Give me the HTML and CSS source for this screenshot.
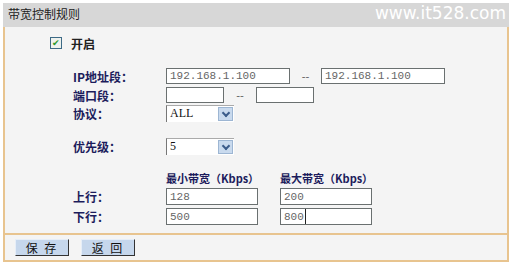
FILE: index.html
```html
<!DOCTYPE html>
<html lang="zh-CN">
<head>
    <meta charset="UTF-8">
    <title>带宽控制规则</title>
    <link rel="stylesheet" href="styles.css">
</head>
<body>
    <div class="page">
        <div class="title">
            <span>带宽控制规则</span>
            <span class="mark">www.it528.com</span>
        </div>
        <form class="panel">
            <div class="row check-row">
                <span class="check">&#10004;</span>
                <span class="label">开启</span>
            </div>
            <div class="row ip-row">
                <span class="label">IP地址段：</span>
                <input type="text" class="ip" value="192.168.1.100">
                <span class="dash">--</span>
                <input type="text" class="ip" value="192.168.1.100">
            </div>
            <div class="row port-row">
                <span class="label">端口段：</span>
                <input type="text" class="port" value="">
                <span class="dash short">--</span>
                <input type="text" class="port" value="">
            </div>
            <div class="row sel-row">
                <span class="label">协议：</span>
                <div class="select"><span class="val">ALL</span><span class="arrow"></span></div>
            </div>
            <div class="row sel-row prio">
                <span class="label">优先级：</span>
                <div class="select"><span class="val">5</span><span class="arrow"></span></div>
            </div>
            <div class="row head-row">
                <span class="label"></span>
                <span class="col">最小带宽（Kbps）</span>
                <span class="col">最大带宽（Kbps）</span>
            </div>
            <div class="row bw-row">
                <span class="label">上行：</span>
                <input type="text" class="bw" value="128">
                <input type="text" class="bw" value="200">
            </div>
            <div class="row bw-row">
                <span class="label">下行：</span>
                <input type="text" class="bw" value="500">
                <div class="bw fake"><span>800</span><i class="caret"></i></div>
            </div>
        </form>
        <div class="footer">
            <button type="button" class="btn">保 存</button>
            <button type="button" class="btn">返 回</button>
        </div>
    </div>
</body>
</html>
```
FILE: styles.css
```css
*{
    margin: 0;
    padding: 0;
    box-sizing: border-box;
}
body{
    background-color: #fff;
    font-family: "Noto Sans CJK SC", sans-serif;
    font-size: 12px;
}
.page{
    margin: 3px 3px 0 3px;
    width: 506px;
}
.title{
    position: relative;
    height: 24px;
    background-color: #d7d7d7;
    color: #222;
    font-size: 12px;
    line-height: 22px;
    padding-left: 5px;
}
.title .mark{
    position: absolute;
    right: 3px;
    top: 0;
    font-family: "DejaVu Sans", sans-serif;
    font-size: 17px;
    line-height: 21px;
    color: #fff;
}
.panel{
    background-color: #f4f4f4;
    border-left: 2px solid #e8c48f;
    border-right: 2px solid #e8c48f;
    border-bottom: 2px solid #e8c48f;
    padding: 8px 0 6px 0;
    height: 208px;
}
.row{
    display: flex;
    align-items: center;
    height: 18px;
}
.label{
    width: 93px;
    margin-left: 68px;
    color: #1c1c5c;
    font-weight: bold;
    font-size: 12px;
}
.check-row{
    height: 16px;
    margin-bottom: 16px;
}
.check{
    width: 12px;
    height: 12px;
    margin-left: 45px;
    border: 1px solid #3d6a86;
    background-color: #eef2ee;
    color: #2e9a2e;
    font-size: 9px;
    line-height: 10px;
    text-align: center;
}
.check-row .label{
    margin-left: 9px;
    width: auto;
    color: #222;
}
input{
    height: 16px;
    border: 1px solid #6a7070;
    background-color: #fff;
    font-family: "Liberation Mono", monospace;
    font-size: 11px;
    color: #666;
    padding: 0 3px;
    outline: none;
}
.ip{
    width: 124px;
}
.dash{
    width: 31px;
    text-align: center;
    color: #555;
    font-size: 11px;
}
.dash.short{
    width: 32px;
}
.port{
    width: 58px;
}
.port-row{
    height: 16px;
    margin-top: 2px;
}
.sel-row{
    height: 20px;
}
.prio{
    margin-top: 13px;
}
.select{
    display: flex;
    width: 68px;
    height: 17px;
    background-color: #fff;
    border-left: 1px solid #777;
    border-top: 1px solid #aaa;
}
.select .val{
    flex: 1;
    font-family: "Liberation Serif", serif;
    font-size: 12px;
    line-height: 15px;
    padding-left: 3px;
    color: #111;
}
.select .arrow{
    position: relative;
    width: 15px;
    margin: 1px 1px 1px 0;
    background-color: #c9daee;
    border: 1px solid #9db6d3;
}
.select .arrow::after{
    content: "";
    position: absolute;
    left: 4px;
    top: 2px;
    width: 4px;
    height: 4px;
    border-right: 2px solid #3b5c8a;
    border-bottom: 2px solid #3b5c8a;
    transform: rotate(45deg);
}
.head-row{
    margin-top: 14px;
    height: 16px;
}
.col{
    width: 114px;
    color: #1c1c5c;
    font-weight: bold;
    font-size: 11px;
}
.bw-row{
    height: 19px;
    margin-top: 1px;
}
.bw{
    width: 92px;
    margin-right: 22px;
    height: 17px;
}
.fake{
    display: flex;
    align-items: center;
    border: 1px solid #6a7070;
    background-color: #fff;
    font-family: "Liberation Mono", monospace;
    font-size: 11px;
    color: #666;
    padding-left: 3px;
}
.caret{
    width: 1px;
    height: 15px;
    background-color: #222;
    margin-left: 1px;
}
.footer{
    display: flex;
    gap: 12px;
    height: 27px;
    padding: 4px 0 0 10px;
    background-color: #f4f4f4;
    border-left: 2px solid #e8c48f;
    border-right: 2px solid #e8c48f;
    border-bottom: 2px solid #e8c48f;
}
.btn{
    width: 54px;
    height: 17px;
    background-color: #c6d7ec;
    border: 1px solid;
    border-color: #e6eef8 #333 #333 #e6eef8;
    font-family: "Noto Sans CJK SC", sans-serif;
    font-size: 12px;
    line-height: 14px;
    color: #111;
    letter-spacing: 2px;
}
```
